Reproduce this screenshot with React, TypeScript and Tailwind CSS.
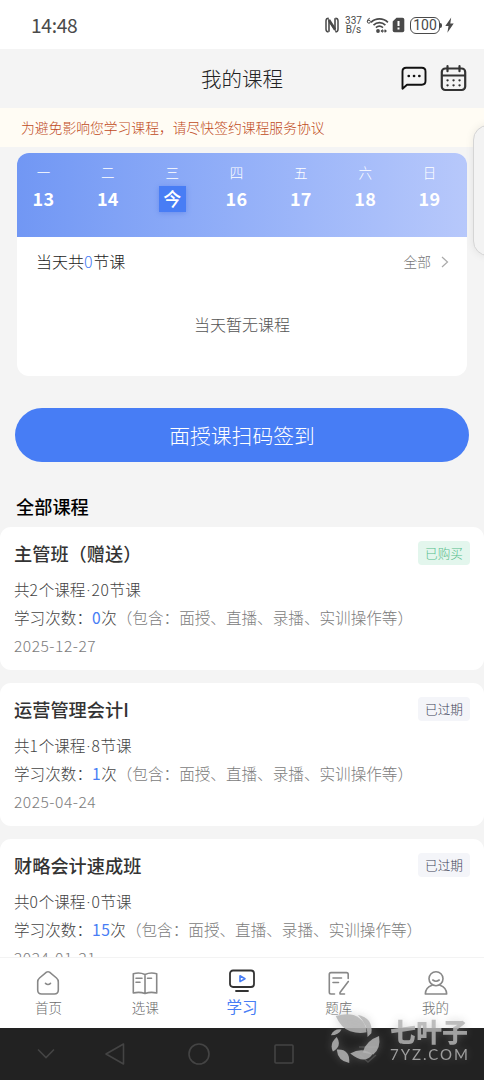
import React from 'react'

const days = [
  { week: '一', date: '13' },
  { week: '二', date: '14' },
  { week: '三', date: '今', today: true },
  { week: '四', date: '16' },
  { week: '五', date: '17' },
  { week: '六', date: '18' },
  { week: '日', date: '19' },
]

const courses = [
  { title: '主管班（赠送）', count: 2, lessons: 20, times: 0, date: '2025-12-27', bought: true },
  { title: '运营管理会计I', count: 1, lessons: 8, times: 1, date: '2025-04-24', bought: false },
  { title: '财略会计速成班', count: 0, lessons: 0, times: 15, date: '2024-01-21', bought: false },
]

function StatusBar() {
  return (
    <div className="h-[49px] shrink-0 bg-white flex items-center justify-between pl-[31px] pr-[30px] text-[#4a4a4a]">
      <span className="text-[19.2px] leading-6 tracking-[-0.3px] pt-[1px]">14:48</span>
      <div className="flex items-center pt-[1px]">
        <svg width="14" height="16" viewBox="0 0 14 16" fill="none" stroke="currentColor">
          <path d="M3.600 1.200Q1 1.200 1 3.800V12.200Q1 14.800 3.600 14.800M10.400 1.200Q13 1.200 13 3.800V12.200Q13 14.800 10.400 14.800" strokeWidth="1.500" />
          <path d="M4 14.800V3.500L10 12.500V1.200" strokeWidth="1.600" />
          <path d="M4 3l6 9.500" strokeWidth="2.600" />
        </svg>
        <div className="w-[17px] ml-[6px] text-center font-['Roboto'] text-[10px] leading-[9.5px]">
          <div>337</div>
          <div>B/s</div>
        </div>
        <svg className="ml-[4px]" width="23" height="18" viewBox="0 0 23 18" fill="none" stroke="currentColor" strokeWidth="1.700">
          <path d="M3.800 2.200Q1.300 3 1.300 5.600" strokeWidth="1" />
          <circle cx="2.900" cy="5.700" r="1.500" strokeWidth="1" />
          <path d="M5 6.300c4.700-4.600 12.200-4.600 16.900 0M7.500 9.100c3.400-3.200 8.500-3.200 11.900 0M9.900 11.700c2-1.700 5-1.700 7.100 0" />
          <circle cx="12" cy="15" r="1.900" fill="currentColor" stroke="none" />
          <path d="M14.500 15l2.300-1.900v3.800zM21 15l-2.300-1.900v3.800z" fill="currentColor" stroke="none" />
          <path d="M15.500 15h4" strokeWidth="1" />
        </svg>
        <svg className="ml-[3px]" width="13" height="16" viewBox="0 0 13 16">
          <path d="M4.500 0.800H10.500Q12.300.8 12.300 2.600V13.400Q12.300 15.200 10.500 15.200H2.500Q.7 15.200.7 13.400V4.600Z" fill="currentColor" />
          <path d="M6.500 4v5M6.500 10.500v2" stroke="white" strokeWidth="2" />
        </svg>
        <div className="ml-[5px] w-[30px] h-[17px] rounded-[6px] border-[1.5px] border-[#4a4a4a] flex items-center justify-center font-['Roboto'] text-[14px] leading-none">
          100
        </div>
        <div className="w-[2px] h-[5px] rounded-r bg-[#4a4a4a]" />
        <svg className="ml-[3px]" width="9" height="16" viewBox="0 0 9 16">
          <path d="M6.200.5L.3 9h3.200L2.400 15.700 8.700 6.600H5.300Z" fill="currentColor" />
        </svg>
      </div>
    </div>
  )
}

function Header() {
  return (
    <header className="relative h-[59px] shrink-0 flex items-center justify-center">
      <h1 className="text-[20.500px] text-[#222] font-light">我的课程</h1>
      <div className="absolute right-[17px] top-[16px] flex gap-[13px]">
        <svg width="26" height="27" viewBox="0 0 26 27" fill="none" stroke="#111" strokeWidth="1.900" strokeLinejoin="round">
          <path d="M5.200 2.800H20.800Q24.500 2.800 24.500 6.500V16Q24.500 19.700 20.800 19.700H6L1.500 23.700V6.500Q1.500 2.800 5.200 2.800Z" />
          <path d="M7.700 11h.1M13 11h.1M18.300 11h.1" strokeWidth="2.600" strokeLinecap="round" />
        </svg>
        <svg width="27" height="27" viewBox="0 0 27 27" fill="none" stroke="#333" strokeWidth="2.200" strokeLinecap="round">
          <rect x="1.800" y="3.500" width="23.400" height="21.500" rx="3.500" />
          <path d="M2 10.500h23M7.500 1.200v5M19.500 1.200v5" />
          <path d="M7.500 15.300h.1M13.500 15.300h.1M19.500 15.300h.1M7.500 20.300h.1M13.500 20.300h.1M19.500 20.300h.1" strokeWidth="2.300" />
        </svg>
      </div>
    </header>
  )
}

function WeekCard() {
  return (
    <section className="mx-[17px] mt-[6px] h-[223px] rounded-[12px] overflow-hidden bg-white">
      <div className="h-[84px] bg-gradient-to-r from-[#7197f4] to-[#b7c8fb] flex justify-between pl-[13px] pr-[24px] pt-[9px] text-white">
        {days.map((d) => (
          <div key={d.week} className="w-[27px] flex flex-col items-center">
            <span className="text-[13.5px] leading-5 font-light">{d.week}</span>
            {d.today ? (
              <span className="mt-[4px] w-[27px] h-[26px] bg-[#487df5] shadow-[0_1px_5px_rgba(60,100,220,0.4)] text-[18px] leading-[25px] font-medium text-center">
                {d.date}
              </span>
            ) : (
              <span className="mt-[4px] text-[18px] leading-[25px] tracking-[0.3px] font-bold">{d.date}</span>
            )}
          </div>
        ))}
      </div>
      <div className="flex items-center justify-between pl-[19px] pr-[18px] pt-[12px]">
        <p className="text-[16px] leading-[25px] text-[#222] font-light">
          当天共<span className="text-[#477df5] tracking-[0.6px]">0</span>节课
        </p>
        <div className="flex items-center gap-[10px] text-[13.7px] leading-[23px] text-[#777] font-light">
          全部
          <svg width="8" height="12" viewBox="0 0 8 12" fill="none" stroke="#aaa" strokeWidth="1.200">
            <path d="M1 1l5.500 5L1 11" />
          </svg>
        </div>
      </div>
      <p className="mt-[38px] text-center text-[16px] leading-6 text-[#555] font-light">当天暂无课程</p>
    </section>
  )
}

function CourseCard({ course }: { course: (typeof courses)[number] }) {
  return (
    <article className="h-[143px] shrink-0 rounded-[11px] bg-white px-[14px] pt-[14px]">
      <div className="flex items-center justify-between h-[24px]">
        <h3 className="text-[18.2px] font-medium text-[#333] leading-6">{course.title}</h3>
        <span
          className={
            course.bought
              ? 'w-[52px] h-[24px] rounded-[4px] bg-[#e3f6ed] text-[#55bd8a] text-[12.6px] leading-[23px] text-center font-light'
              : 'w-[52px] h-[24px] rounded-[4px] bg-[#f4f5f9] text-[#3d4358] text-[12.6px] leading-[23px] text-center font-light'
          }
        >
          {course.bought ? '已购买' : '已过期'}
        </span>
      </div>
      <div className="mt-[11px] text-[15.6px] leading-[26px] text-[#444] whitespace-nowrap font-light">
        <p className="h-7">
          共<span className="tracking-[0.7px]">{course.count}</span>个课程
          <span className="inline-block w-[6px] text-center font-['Roboto'] leading-none">·</span>
          <span className="tracking-[0.7px]">{course.lessons}</span>节课
        </p>
        <p className="h-7">
          学习次数：<span className="text-[#477df5] font-normal tracking-[0.5px]">{course.times}</span>次
          <span className="text-[#7c7c7c]">（包含：面授、直播、录播、实训操作等）</span>
        </p>
        <p className="h-7 text-[#7c7c7c] tracking-[0.5px]">{course.date}</p>
      </div>
    </article>
  )
}

const tabs = [
  {
    label: '首页',
    icon: <path d="M11.500 2.200Q13 1.200 14.500 2.200L21.500 8Q23.300 9.500 23.300 12V20Q23.300 24 19.300 24H6.700Q2.700 24 2.700 20V12Q2.700 9.500 4.500 8ZM10.500 13.300q2.500 2.400 5 0" />,
  },
  {
    label: '选课',
    icon: <path d="M13 4.500Q7.500 2 1.300 3.800V23Q7.500 21.500 13 23.500Q18.500 21.500 24.700 23V3.800Q18.500 2 13 4.500V23.500M4 8.300h6M4 12.300h4M15.500 8.300h4" />,
  },
  {
    label: '题库',
    icon: <path d="M8.500 24H5Q3.300 24 3.300 22.300V4.300Q3.300 2.600 5 2.600H20.500Q22.200 2.600 22.200 4.300V8.500M7 8h8.500M7 12.500h5.500M22.300 11.500L14 22.500V24H18.500" />,
  },
  {
    label: '我的',
    icon: (
      <>
        <circle cx="13" cy="8.700" r="7" />
        <path d="M9.800 10q3.200 2.500 6.400 0M9 15.200Q2.500 17.500 2.300 24H23.700Q23.500 17.500 17 15.200" />
      </>
    ),
  },
]

function Tab({ tab }: { tab: (typeof tabs)[number] }) {
  return (
    <div className="flex-1 flex flex-col items-center pt-[12px] text-[#888]">
      <svg width="26" height="26" viewBox="0 0 26 26" fill="none" stroke="currentColor" strokeWidth="1.600" strokeLinejoin="round" strokeLinecap="round">
        {tab.icon}
      </svg>
      <span className="mt-[1px] text-[13.5px] leading-5 font-light text-[#6c6c6c]">{tab.label}</span>
    </div>
  )
}

function TabBar() {
  return (
    <nav className="h-[71px] shrink-0 bg-white border-t border-[#f3f3f3] flex">
      <Tab tab={tabs[0]} />
      <Tab tab={tabs[1]} />
      <div className="flex-1 flex flex-col items-center pt-[10px] text-[#477df5]">
        <svg width="26" height="26" viewBox="0 0 26 26" fill="none" stroke="#333" strokeWidth="1.800" strokeLinecap="round">
          <rect x="1" y="2.500" width="24" height="16.500" rx="3" />
          <path d="M7 23h12" />
          <path d="M11 7.800v5.800l5-2.900z" stroke="#477df5" strokeWidth="1.600" strokeLinejoin="round" />
        </svg>
        <span className="mt-[2px] text-[15.5px] leading-5">学习</span>
      </div>
      <Tab tab={tabs[2]} />
      <Tab tab={tabs[3]} />
    </nav>
  )
}

function SystemNav() {
  return (
    <div className="h-[52px] shrink-0 bg-[#222] flex items-center text-[#444]">
      <svg className="ml-[36px]" width="20" height="20" viewBox="0 0 20 20" fill="none" stroke="currentColor" strokeWidth="1.600">
        <path d="M2 5.500l8 8 8-8" />
      </svg>
      <svg className="ml-[48px]" width="22" height="24" viewBox="0 0 22 24" fill="none" stroke="currentColor" strokeWidth="1.600" strokeLinejoin="round">
        <path d="M19.500 2v20L2 12Z" />
      </svg>
      <svg className="ml-[61px]" width="24" height="24" viewBox="0 0 24 24" fill="none" stroke="currentColor" strokeWidth="1.600">
        <circle cx="12" cy="12" r="10" />
      </svg>
      <svg className="ml-[62px]" width="22" height="22" viewBox="0 0 22 22" fill="none" stroke="currentColor" strokeWidth="1.600">
        <rect x="2" y="2" width="18" height="18" rx="1" />
      </svg>
      <svg className="ml-[63px]" width="20" height="24" viewBox="0 0 20 24" fill="none" stroke="currentColor" strokeWidth="1.600">
        <path d="M1 5h18M2 13l8 7 8-7" />
      </svg>
    </div>
  )
}

function Watermark() {
  return (
    <div className="absolute left-[330px] top-[1013px] flex text-[#b4b4b4]/85 drop-shadow-[0_0_4px_rgba(150,150,150,0.45)]">
      <svg width="51" height="52" viewBox="0 0 53 54" fill="currentColor">
        <path d="M6 3Q22 -1 30 5Q38 11 38 20Q30 22 21 19Q11 15 6 3Z" />
        <path d="M29 2Q45 5 43 21L39 25Q40 13 29 2Z" />
        <path d="M51 24Q53 37 45 43L34 41Q37 29 51 24Z" />
        <path d="M21 42Q34 35 44 43Q36 54 21 42Z" />
        <path d="M7 38Q21 37 20 52Q8 50 7 38Z" />
        <path d="M7 25Q13 34 3 40Q-1 32 7 25Z" />
        <path d="M1 23Q4 16 12 17Q9 23 1 23Z" />
      </svg>
      <div className="ml-[9px] pt-[5px]">
        <div className="text-[26px] leading-[26px] font-black whitespace-nowrap">七叶子</div>
        <div className="mt-[1px] font-['Lato'] text-[15px] leading-[18px] tracking-[2px] whitespace-nowrap">7YZ.COM</div>
      </div>
    </div>
  )
}

export default function App() {
  return (
    <main className="relative w-[484px] h-[1080px] overflow-hidden flex flex-col bg-[#f4f4f4] font-['Noto_Sans_CJK_SC',sans-serif]">
      <StatusBar />
      <Header />
      <div className="h-[39px] shrink-0 bg-[#fffcf4] pl-[21px] text-[13.8px] leading-[38px] text-[#c04a22] font-light whitespace-nowrap">
        为避免影响您学习课程，请尽快签约课程服务协议
      </div>
      <div className="flex-1 min-h-0 overflow-hidden">
        <WeekCard />
        <button className="block ml-[15px] mt-[32px] w-[454px] h-[54px] rounded-full bg-[#477df5] text-white text-[20.8px] leading-[54px] font-light">
          面授课扫码签到
        </button>
        <h2 className="mt-[31px] ml-[16px] h-[27px] text-[18.2px] leading-[27px] font-medium text-black">全部课程</h2>
        <div className="mt-[7px] flex flex-col gap-[13.2px]">
          {courses.map((c) => (
            <CourseCard key={c.title} course={c} />
          ))}
        </div>
      </div>
      <TabBar />
      <SystemNav />
      {/* edge panel handle */}
      <div className="absolute left-[473px] top-[125px] w-[30px] h-[131px] rounded-[15px] bg-[#f3f3f3] border border-[#d5d5d5] shadow-[0_0_8px_rgba(0,0,0,0.08)]" />
      <Watermark />
    </main>
  )
}
